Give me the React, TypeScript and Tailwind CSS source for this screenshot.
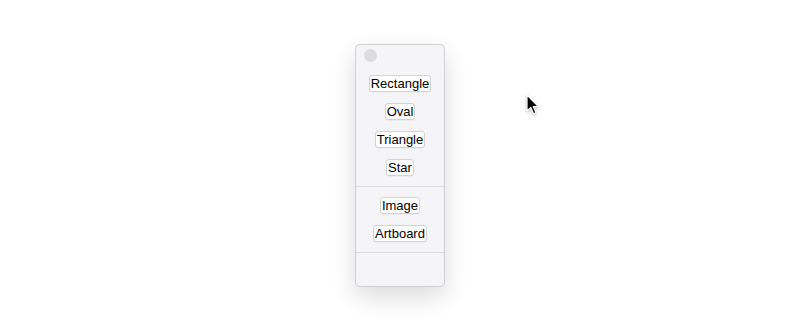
const tools = [
  { group: 'shapes', items: ['Rectangle', 'Oval', 'Triangle', 'Star'] },
  { group: 'media', items: ['Image', 'Artboard'] },
];

function ToolButton({ label }: { label: string }) {
  return (
    <div className="h-[28px] flex items-center justify-center">
      <button className="h-[17px] px-px flex items-center rounded-[3px] border border-[#d3d3d3] bg-white text-[13px] leading-none text-black shadow-[0_0.5px_0_rgba(0,0,0,0.06)]">
        {label}
      </button>
    </div>
  );
}

function Cursor() {
  return (
    <svg
      className="absolute left-[525px] top-[93px] drop-shadow-[0_1px_1px_rgba(0,0,0,0.3)]"
      width="16"
      height="24"
      viewBox="0 0 16 24"
    >
      <path
        d="M2 2 L2 18 L5.8 14.4 L8.6 20.8 L11 19.8 L8.3 13.6 L13.4 13.6 Z"
        fill="#000"
        stroke="#fff"
        strokeWidth="1.2"
        strokeLinejoin="round"
      />
    </svg>
  );
}

export default function App() {
  return (
    <div
      className="relative w-full h-[331px] bg-white flex items-center justify-center"
      style={{ fontFamily: '"Liberation Sans", Arial, sans-serif' }}
    >
      {/* Tool palette */}
      <div className="w-[90px] h-[243px] flex flex-col rounded-[5px] border border-[#d0d0d0] bg-[#f5f4f6] shadow-[0_10px_24px_rgba(0,0,0,0.14)]">
        <div className="pt-[4px] pl-[8px]">
          <div className="w-[13px] h-[13px] rounded-full bg-[#dcdcdc]" />
        </div>

        <div className="pt-[7px] pb-[5px] border-b border-[#dedede]">
          {tools[0].items.map((t) => (
            <ToolButton key={t} label={t} />
          ))}
        </div>

        <div className="pt-[4px] pb-[5px] border-b border-[#dedede]">
          {tools[1].items.map((t) => (
            <ToolButton key={t} label={t} />
          ))}
        </div>

        <div className="flex-1" />
      </div>

      <Cursor />
    </div>
  );
}
